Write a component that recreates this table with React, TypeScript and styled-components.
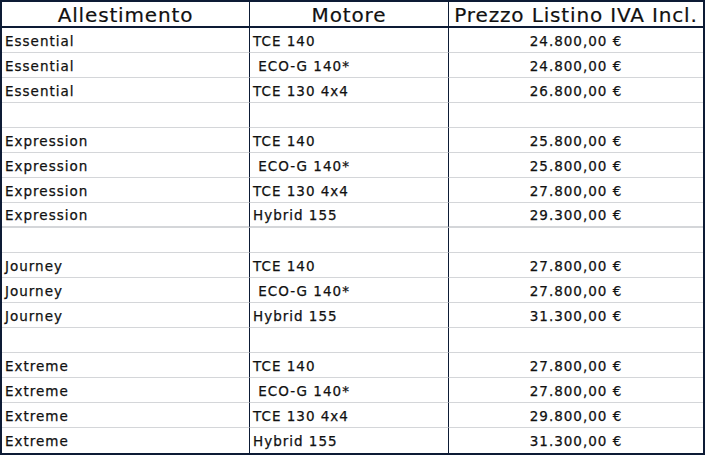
import React from "react";
import styled, { createGlobalStyle } from "styled-components";

const Global = createGlobalStyle`
  html, body { margin: 0; padding: 0; background: #ffffff; }
  body { font-family: "DejaVu Sans", "Liberation Sans", sans-serif; }
`;

const NAVY = "#0d1b35";
const LINE = "#d4d6d9";

const Table = styled.div`
  width: 705px;
  box-sizing: border-box;
  border: 2px solid ${NAVY};
  border-bottom-width: 3px;
  display: grid;
  grid-template-columns: 248px 199px 254px;
  background: #fff;
  color: #111111;
`;

const HeadCell = styled.div<{ $last?: boolean }>`
  height: 26px;
  box-sizing: border-box;
  border-bottom: 2px solid ${NAVY};
  border-right: ${(p) => (p.$last ? "none" : `1px solid ${NAVY}`)};
  display: flex;
  align-items: center;
  justify-content: center;
  font-size: 20px;
  letter-spacing: 0.85px;
  line-height: 1;
  padding-top: 1px;
  white-space: nowrap;
  -webkit-text-stroke: 0.2px #111111;
`;

const Cell = styled.div<{
  $align?: "left" | "center";
  $last?: boolean;
  $thick?: boolean;
  $end?: boolean;
}>`
  height: 25px;
  box-sizing: border-box;
  border-bottom: ${(p) =>
    p.$end ? "none" : p.$thick ? `2px solid ${LINE}` : `1px solid ${LINE}`};
  border-right: ${(p) => (p.$last ? "none" : `1px solid ${NAVY}`)};
  display: flex;
  align-items: center;
  justify-content: ${(p) => (p.$align === "center" ? "center" : "flex-start")};
  padding: 3px ${(p) => (p.$align === "center" ? "0" : "4px")} 0 ${(p) =>
      p.$align === "center" ? "0" : "3px"};
  font-size: 13.5px;
  letter-spacing: 1px;
  line-height: 1;
  white-space: pre;
  -webkit-text-stroke: 0.25px #111111;
`;

type Row = [string, string, string] | null;

const rows: Row[] = [
  ["Essential", "TCE 140", "24.800,00 €"],
  ["Essential", " ECO-G 140*", "24.800,00 €"],
  ["Essential", "TCE 130 4x4", "26.800,00 €"],
  null,
  ["Expression", "TCE 140", "25.800,00 €"],
  ["Expression", " ECO-G 140*", "25.800,00 €"],
  ["Expression", "TCE 130 4x4", "27.800,00 €"],
  ["Expression", "Hybrid 155", "29.300,00 €"],
  null,
  ["Journey", "TCE 140", "27.800,00 €"],
  ["Journey", " ECO-G 140*", "27.800,00 €"],
  ["Journey", "Hybrid 155", "31.300,00 €"],
  null,
  ["Extreme", "TCE 140", "27.800,00 €"],
  ["Extreme", " ECO-G 140*", "27.800,00 €"],
  ["Extreme", "TCE 130 4x4", "29.800,00 €"],
  ["Extreme", "Hybrid 155", "31.300,00 €"],
];

export default function App() {
  return (
    <>
      <Global />
      <Table>
        <HeadCell>Allestimento</HeadCell>
        <HeadCell>Motore</HeadCell>
        <HeadCell $last>Prezzo Listino IVA Incl.</HeadCell>
        {rows.map((r, i) => {
          const end = i === rows.length - 1;
          const thick = i === 7;
          const [a, b, c] = r ?? ["", "", ""];
          return (
            <React.Fragment key={i}>
              <Cell $end={end} $thick={thick}>{a}</Cell>
              <Cell $end={end} $thick={thick}>{b}</Cell>
              <Cell $end={end} $thick={thick} $last $align="center">
                {c}
              </Cell>
            </React.Fragment>
          );
        })}
      </Table>
    </>
  );
}
